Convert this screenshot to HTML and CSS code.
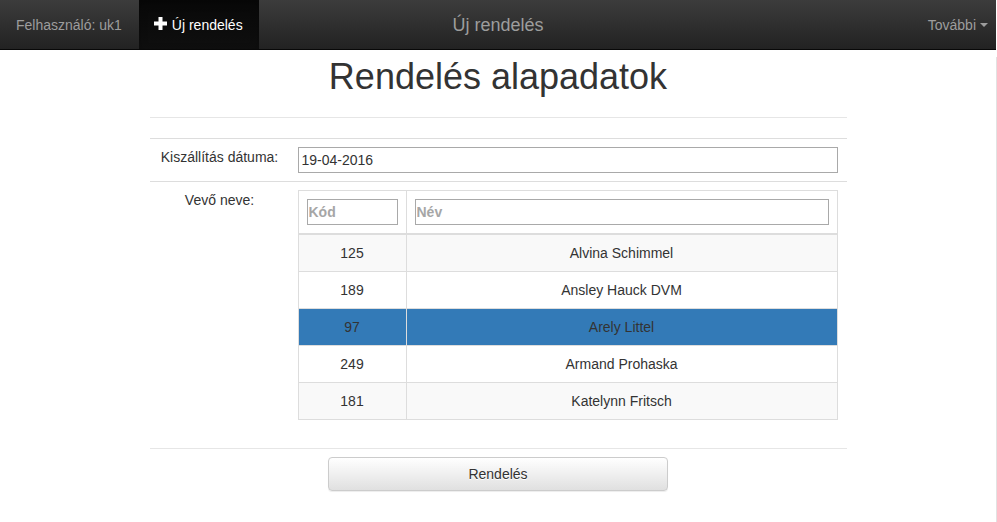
FILE: index.html
```html
<!DOCTYPE html>
<html lang="hu">
<head>
<meta charset="utf-8">
<title>Új rendelés</title>
<link rel="stylesheet" href="styles.css">
</head>
<body>
<nav class="navbar">
  <div class="nav-left">
    <span class="nav-item user">Felhasználó: uk1</span>
    <a class="nav-item active" href="#"><svg class="icon-plus" width="13" height="13" viewBox="0 0 13 13" aria-hidden="true"><rect x="4.5" y="0" width="4" height="13" fill="#fff"/><rect x="0" y="4.5" width="13" height="4" fill="#fff"/></svg>Új rendelés</a>
  </div>
  <div class="brand">Új rendelés</div>
  <div class="nav-right">
    <a class="nav-item more" href="#">További <span class="caret"></span></a>
  </div>
</nav>
<div class="page">
  <main class="container">
    <h1 class="page-title">Rendelés alapadatok</h1>
    <hr class="divider">
    <table class="form-table">
      <tr>
        <th class="label">Kiszállítás dátuma:</th>
        <td class="value"><input class="field" type="text" value="19-04-2016"></td>
      </tr>
      <tr>
        <th class="label">Vevő neve:</th>
        <td class="value">
          <table class="customers">
            <thead>
              <tr>
                <th class="col-code"><input class="filter" type="text" placeholder="Kód"></th>
                <th class="col-name"><input class="filter" type="text" placeholder="Név"></th>
              </tr>
            </thead>
            <tbody>
              <tr><td>125</td><td>Alvina Schimmel</td></tr>
              <tr><td>189</td><td>Ansley Hauck DVM</td></tr>
              <tr class="selected"><td>97</td><td>Arely Littel</td></tr>
              <tr><td>249</td><td>Armand Prohaska</td></tr>
              <tr><td>181</td><td>Katelynn Fritsch</td></tr>
            </tbody>
          </table>
        </td>
      </tr>
    </table>
    <hr class="divider bottom">
    <div class="actions">
      <button class="btn" type="button">Rendelés</button>
    </div>
  </main>
</div>
</body>
</html>
```
FILE: styles.css
```css
* {
  box-sizing: border-box;
}

html, body {
  margin: 0;
  padding: 0;
}

body {
  font-family: "Liberation Sans", Arial, sans-serif;
  font-size: 14px;
  line-height: 20px;
  color: #333;
  background: #fff;
}

/* Navbar */
.navbar {
  display: grid;
  grid-template-columns: 1fr auto 1fr;
  height: 50px;
  background: linear-gradient(to bottom, #3c3c3c 0%, #222 100%);
  border-bottom: 1px solid #080808;
  margin-right: 1px;
}

.nav-left {
  display: flex;
}

.nav-right {
  display: flex;
  justify-content: flex-end;
}

.nav-item {
  display: flex;
  align-items: flex-start;
  height: 49px;
  padding: 15px;
  color: #9d9d9d;
  text-decoration: none;
  white-space: nowrap;
}

.nav-item.user {
  padding-left: 16px;
  padding-right: 17px;
}

.nav-item.active {
  background: linear-gradient(to bottom, #080808 0%, #0f0f0f 100%);
  box-shadow: inset 0 3px 9px rgba(0, 0, 0, 0.25);
  color: #fff;
  padding-left: 15px;
  padding-right: 16px;
}

.icon-plus {
  margin-top: 2px;
  margin-right: 5px;
  flex: none;
}

.nav-item.more {
  padding-right: 8px;
  align-items: center;
  padding-top: 0;
  padding-bottom: 0;
}

.caret {
  display: inline-block;
  width: 0;
  height: 0;
  margin-left: 4px;
  border-top: 4px solid #9d9d9d;
  border-left: 4px solid transparent;
  border-right: 4px solid transparent;
}

.brand {
  padding: 15px;
  font-size: 18px;
  line-height: 20px;
  color: #9d9d9d;
  white-space: nowrap;
}

/* Page */
.page {
  min-height: calc(100vh - 50px);
  border-right: 1px solid #e2e2e2;
}

.container {
  width: 697px;
  margin: 0 auto;
}

.page-title {
  margin: 7px 0 20px;
  font-size: 36px;
  line-height: 39.6px;
  font-weight: 500;
  text-align: center;
  color: #333;
}

.divider {
  margin: 0 0 20px;
  border: 0;
  border-top: 1px solid #e6e6e6;
  height: 0;
}

.divider.bottom {
  margin-bottom: 8px;
}

/* Form table */
.form-table {
  width: 100%;
  border-collapse: collapse;
  margin-bottom: 20px;
}

.form-table > tbody > tr > th,
.form-table > tbody > tr > td {
  padding: 8px;
  border-top: 1px solid #dddddd;
  vertical-align: top;
}

.form-table > tbody > tr > td.value {
  padding-right: 9px;
}

.form-table .label {
  width: 140px;
  font-weight: normal;
  text-align: center;
}

.field {
  display: block;
  width: 100%;
  height: 26px;
  padding: 0 3px;
  border: 1px solid #a9a9a9;
  font-family: "Liberation Sans", Arial, sans-serif;
  font-size: 14px;
  color: #333;
  background: #fff;
}

/* Customers table */
.customers {
  width: 100%;
  table-layout: fixed;
  border-collapse: collapse;
  border: 1px solid #dddddd;
}

.customers th,
.customers td {
  padding: 8px;
  border: 1px solid #dddddd;
  text-align: center;
  vertical-align: top;
}

.customers thead th {
  border-bottom: 2px solid #dddddd;
  font-weight: normal;
}

.customers .col-code {
  width: 108px;
}

.customers tbody tr:nth-child(odd) td {
  background: #f9f9f9;
}

.customers tbody tr.selected td {
  background: #337ab7;
  color: #333;
}

.filter {
  display: block;
  width: 100%;
  height: 26px;
  padding: 0 1px;
  border: 1px solid #a9a9a9;
  font-family: "Liberation Sans", Arial, sans-serif;
  font-size: 14px;
  font-weight: bold;
  color: #333;
  background: #fff;
}

.filter::placeholder {
  color: #a6a6a6;
  font-weight: bold;
  opacity: 1;
}

/* Button */
.actions {
  text-align: center;
}

.btn {
  width: 340px;
  height: 34px;
  padding: 6px 12px;
  font-family: "Liberation Sans", Arial, sans-serif;
  font-size: 14px;
  line-height: 20px;
  color: #333;
  background: linear-gradient(to bottom, #ffffff 0%, #e0e0e0 100%);
  border: 1px solid #cccccc;
  border-radius: 4px;
  text-shadow: 0 1px 0 #fff;
  box-shadow: inset 0 1px 0 rgba(255, 255, 255, 0.15), 0 1px 1px rgba(0, 0, 0, 0.075);
  cursor: pointer;
}
```
